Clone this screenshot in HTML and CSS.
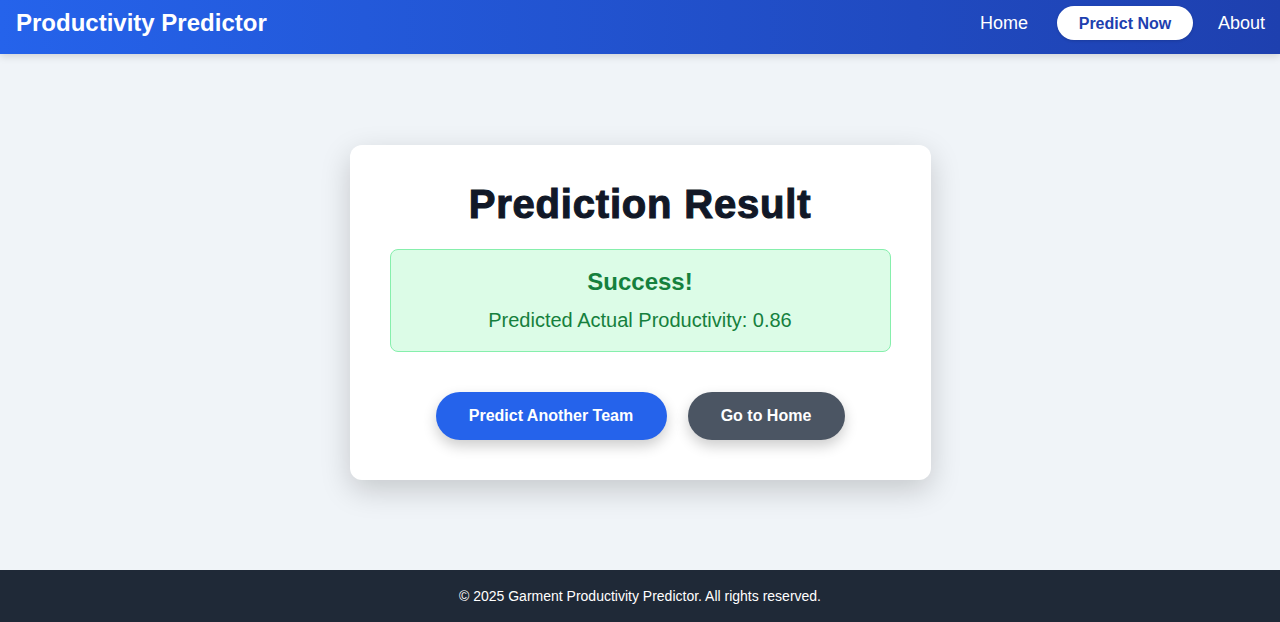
FILE: index.html
```html
<!DOCTYPE html>
<html lang="en">
<head>
<meta charset="utf-8">
<title>Prediction Result</title>
<link rel="stylesheet" href="styles.css">
</head>
<body>
<header class="topbar">
  <div class="brand">Productivity Predictor</div>
  <nav class="nav">
    <a class="nav-link" href="#">Home</a>
    <a class="nav-pill" href="#">Predict Now</a>
    <a class="nav-link" href="#">About</a>
  </nav>
</header>
<main class="main">
  <section class="card">
    <h1 class="title">Prediction Result</h1>
    <div class="alert">
      <div class="alert-title">Success!</div>
      <div class="alert-text">Predicted Actual Productivity: 0.86</div>
    </div>
    <div class="actions">
      <a class="btn btn-primary" href="#">Predict Another Team</a>
      <a class="btn btn-dark" href="#">Go to Home</a>
    </div>
  </section>
</main>
<footer class="footer">© 2025 Garment Productivity Predictor. All rights reserved.</footer>
</body>
</html>
```
FILE: styles.css
```css
* { box-sizing: border-box; }
html, body { height: 100%; }
body {
  margin: 0;
  font-family: "Liberation Sans", Arial, sans-serif;
  background: #f0f4f8;
  display: flex;
  flex-direction: column;
  min-height: 100vh;
}
.topbar {
  height: 54px;
  flex: 0 0 auto;
  display: flex;
  align-items: center;
  justify-content: space-between;
  padding: 0 15px 0 16px;
  background: linear-gradient(90deg, #2563eb 0%, #1e40af 100%);
  box-shadow: 0 2px 8px rgba(0,0,0,0.15);
  position: relative;
  z-index: 2;
}
.brand {
  color: #fff;
  font-size: 24px;
  font-weight: 700;
  margin-top: -9px;
}
.nav {
  display: flex;
  align-items: center;
  gap: 25px;
  margin-top: -8px;
}
.nav-link {
  color: #fff;
  text-decoration: none;
  font-size: 18px;
}
.nav-pill {
  margin-left: 4px;
  background: #fff;
  color: #1e40af;
  font-weight: 700;
  font-size: 16px;
  text-decoration: none;
  height: 34px;
  width: 136px;
  padding-top: 2px;
  display: flex;
  align-items: center;
  justify-content: center;
  border-radius: 17px;
  box-shadow: 0 1px 3px rgba(0,0,0,0.15);
}
.main {
  flex: 1 1 auto;
  display: flex;
  align-items: center;
  justify-content: center;
}
.card {
  width: 581px;
  background: #fff;
  border-radius: 12px;
  padding: 36px 40px 40px;
  box-shadow: 0 10px 30px rgba(0,0,0,0.18);
  margin-top: 0;
}
.title {
  margin: 0 0 22px;
  text-align: center;
  font-size: 40px;
  line-height: 46px;
  font-weight: 900;
  letter-spacing: 0.8px;
  color: #111827;
  -webkit-text-stroke: 1.1px #111827;
}
.alert {
  background: #dcfce7;
  border: 1px solid #86efac;
  border-radius: 8px;
  text-align: center;
  color: #15803d;
  padding: 18px 16px 19px;
}
.alert-title {
  font-size: 24px;
  font-weight: 700;
  line-height: 28px;
}
.alert-text {
  font-size: 20px;
  line-height: 24px;
  margin-top: 12px;
}
.actions {
  display: flex;
  justify-content: center;
  gap: 21px;
  margin-top: 40px;
}
.btn {
  height: 48px;
  display: flex;
  align-items: center;
  justify-content: center;
  border-radius: 24px;
  color: #fff;
  font-weight: 700;
  font-size: 16px;
  text-decoration: none;
  box-shadow: 0 6px 14px rgba(0,0,0,0.2);
}
.btn-primary { background: #2563eb; width: 231px; }
.btn-dark { background: #4b5563; width: 157px; }
.footer {
  flex: 0 0 auto;
  height: 52px;
  background: #1f2937;
  color: #fff;
  font-size: 14px;
  display: flex;
  align-items: center;
  justify-content: center;
}
```
